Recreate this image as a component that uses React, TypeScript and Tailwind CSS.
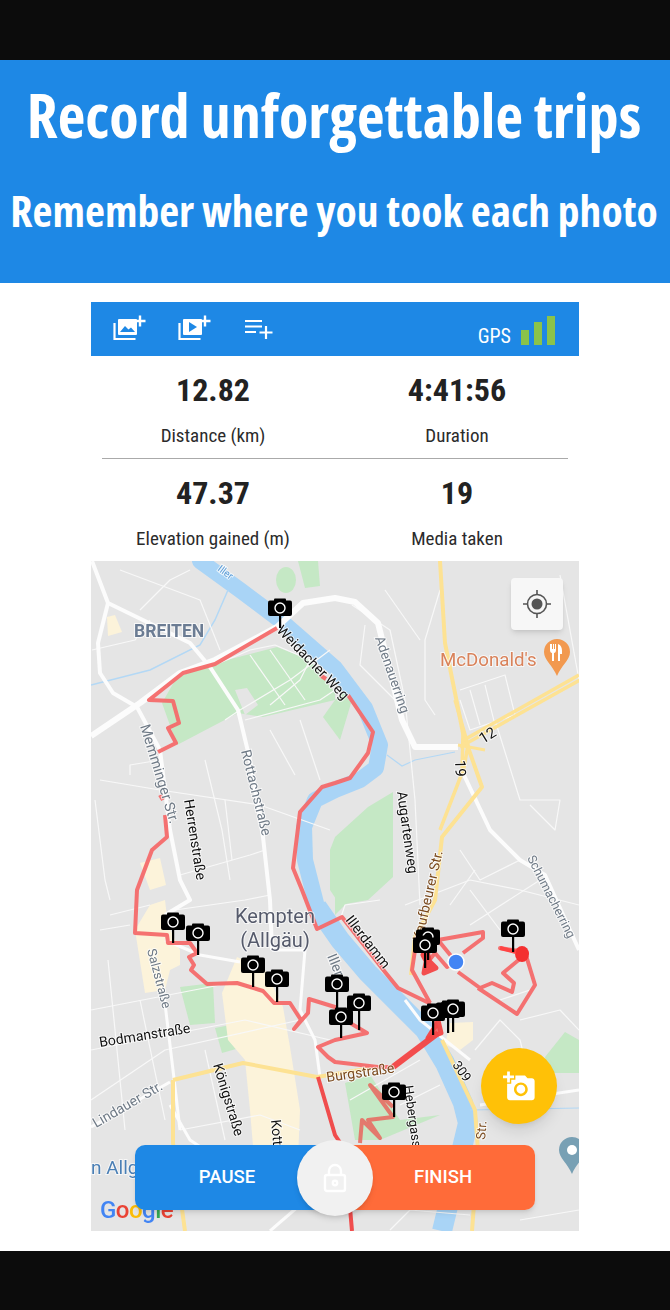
import React from "react";

const whiteMain: [string, number][] = [
  ["91,736 140,703 180,673 215,660 277,627 303,603 335,598 355,602 378,623 402,720 415,747 458,747", 6],
  ["92,561 108,603 190,643 210,667 238,710 250,760 263,837 270,900 272,950", 4],
  ["108,603 98,643 100,673 113,693 137,707 160,750 170,830 180,880 190,900 165,915", 4],
  ["163,987 173,1070 180,1130", 3],
  ["91,1127 170,1082", 3],
  ["463,773 490,830 520,860 545,875 579,950", 4],
  ["272,950 305,950 300,1010 315,1040 320,1077", 3],
  ["165,940 200,955 240,962", 3],
  ["405,1000 420,1020 470,1060", 3],
  ["480,1105 579,1090", 3],
  ["170,1105 190,1140 205,1150", 3],
  ["270,1231 300,1205", 3],
];
const whiteThin: string[] = [
  "92,650 135,640 150,620",
  "120,570 200,600 220,650",
  "140,610 170,580 190,570",
  "100,780 160,790 260,805 330,830",
  "95,800 105,880 110,900",
  "160,760 130,765 130,775",
  "205,760 222,830 230,880",
  "225,720 240,710 290,680 330,650",
  "245,720 320,700 335,690",
  "215,665 250,650 275,645 310,660 300,680 270,705",
  "250,655 285,705",
  "270,650 305,700",
  "180,875 250,855 265,850",
  "175,910 245,900 270,895",
  "225,800 232,860",
  "300,720 320,780",
  "270,730 295,775",
  "440,590 425,640 425,700 435,715",
  "385,590 420,640",
  "460,690 505,675 515,715 470,730 460,700",
  "470,690 480,725",
  "485,685 495,725",
  "495,720 520,800 560,800 555,830 530,805",
  "560,575 579,680",
  "352,605 390,630 405,700 415,800 420,905",
  "365,625 360,665 395,700",
  "460,850 480,880 520,860",
  "405,905 470,880 520,890 579,905",
  "450,905 475,870",
  "470,890 500,930",
  "340,920 345,905 380,900",
  "470,925 540,880",
  "500,1000 530,990",
  "475,1050 500,1020 520,1040 525,1060",
  "91,1010 220,985",
  "91,1050 245,1020 330,1040",
  "108,960 125,1130",
  "140,1000 165,1120",
  "91,1100 165,1050 300,1020",
  "180,1130 260,1115 300,1130",
  "205,1050 225,1140",
  "110,915 150,905",
  "100,930 130,925",
  "350,1100 420,1060",
  "400,1105 440,1085",
  "390,1230 410,1210 470,1215",
  "520,1220 579,1210",
  "520,1020 560,1010 579,1030",
];
const yellow: [string, number][] = [
  ["173,1080 243,1063 317,1077 378,1067", 4],
  ["173,1080 173,1143 185,1231", 4],
  ["440,561 445,643 463,733 482,787 442,837 435,900 415,937 411,975", 4],
  ["463,733 462,773 440,830", 3.5],
  ["455,700 468,745 463,773", 3.5],
  ["460,747 580,680", 3.5],
  ["462,741 579,675", 3.5],
  ["458,745 485,750", 3],
  ["442,1040 475,1110 478,1150 472,1231", 4],
];
const route1a = "277,628 215,664 183,673 149,700 173,701 179,723 168,728 176,743 158,752";
const route1b = "165,815 167,837 152,850 137,890 135,933 167,935 168,943 190,943 197,953 189,957 194,965 191,970 207,984 237,983 263,991 274,1003 290,1003 301,1020 294,1029 308,1013 309,999 335,1007 345,1020 367,1033 335,1040 318,1047 328,1057 335,1062 378,1067 393,1067";
const route2 = "438,1033 429,1003 398,988 385,972 342,917 317,929 302,890 293,868 300,812 322,787 335,783 350,778 368,753 373,732 348,695";
const route3 = "430,1003 412,970 417,937 427,963 435,953 447,967 456,962 438,940 483,932 483,938 463,953";
const route4 = "458,972 480,988 492,983 512,992 514,983 503,973 527,953 500,948 525,952 535,985 517,1014 478,988";
const cams: [number, number, number][] = [
  [280, 608, 628], [173, 922, 943], [198, 933, 955], [253, 965, 987], [277, 979, 1002],
  [337, 984, 1010], [359, 1003, 1030], [341, 1017, 1038], [428, 937, 960], [425, 945, 968],
  [513, 929, 952], [448, 1010, 1033], [453, 1009, 1032], [433, 1013, 1035], [394, 1092, 1117],
];
const labels: [string, number, number, number, number, string][] = [
  ["Iller", 217, 570, 37, 10, "#5b9bd5"],
  ["Weidacher Weg", 276, 631, 46, 14, "#111"],
  ["Memminger Str.", 140, 726, 73, 14.5, "#6f7a86"],
  ["Herrenstraße", 184, 800, 81, 14, "#111"],
  ["Rottachstraße", 241, 751, 76, 14, "#6f7a86"],
  ["Adenauerring", 375, 638, 71, 13.5, "#6f7a86"],
  ["Augartenweg", 397, 792, 82, 14, "#111"],
  ["Kaufbeurer Str.", 422, 942, -77, 14, "#7a4a1e"],
  ["Schumacherring", 527, 858, 63, 12.5, "#6f7a86"],
  ["Illerdamm", 345, 920, 52, 14, "#111"],
  ["Iller", 327, 956, 68, 14, "#6f7a86"],
  ["Salzstraße", 147, 950, 75, 13, "#6f7a86"],
  ["Bodmanstraße", 100, 1047, -9, 14, "#111"],
  ["Königstraße", 213, 1065, 73, 14, "#111"],
  ["Lindauer Str.", 96, 1128, -30, 14, "#6f7a86"],
  ["Kottern", 271, 1120, 85, 14, "#111"],
  ["Burgstraße", 327, 1082, -8, 14, "#7a4a1e"],
  ["Hebergasse", 404, 1086, 82, 13, "#111"],
  ["309", 452, 1065, 54, 13, "#111"],
  ["Str.", 485, 1140, -85, 13, "#7a4a1e"],
  ["12", 483, 744, -32, 15, "#111"],
  ["19", 455, 760, 88, 15, "#111"],
];

function MapDrawing() {
  const halo = { paintOrder: "stroke" as const, stroke: "#ffffff", strokeWidth: 2, strokeOpacity: 0.7 };
  return (
    <svg viewBox="91 561 488 670" className="block w-full h-full blur-[0.5px]" style={{ fontFamily: "Roboto, sans-serif" }}>
      <rect x="91" y="561" width="488" height="670" fill="#e5e5e5" />
      <g fill="#c5e8c5">
        <polygon points="178,675 215,663 277,647 310,660 335,693 335,700 263,717 238,713 177,745 162,703" />
        <polygon points="323,717 335,700 345,690 352,700 340,740" />
        <ellipse cx="286" cy="580" rx="10" ry="13" />
        <polygon points="298,561 318,561 320,586 305,588" />
        <polygon points="335,837 368,807 393,792 393,877 368,900 340,905 330,890 330,850" />
        <polygon points="180,987 213,983 215,1023 190,1025" />
        <polygon points="215,1028 230,1025 243,1047 222,1053" />
        <polygon points="345,1083 370,1075 400,1120 440,1115 380,1140 355,1140" />
        <polygon points="545,1057 565,1032 579,1040 579,1073 548,1073" />
        <polygon points="335,890 360,890 338,912 335,915" />
      </g>
      <polygon points="235,690 247,688 258,705 245,715" fill="#e5e5e5" />
      <g fill="#fcf3da">
        <polygon points="222,993 237,957 265,970 283,1007 290,1047 300,1110 298,1160 255,1170 250,1110 245,1060 228,1040" />
        <polygon points="150,905 165,900 168,925 180,950 180,965 170,970 165,990 145,993 135,930" />
        <polygon points="107,617 115,615 122,632 108,636" />
        <polygon points="140,863 160,858 166,885 150,890" />
        <polygon points="450,1023 473,1022 473,1040 460,1050 445,1045" />
      </g>
      <polyline points="200,561 240,590 280,620 335,668 365,708 380,745 376,768 360,780 335,790 315,800 304,827 305,860 317,907" fill="none" stroke="#a9d4f6" strokeWidth="16" strokeLinejoin="round" strokeLinecap="round" />
      <polyline points="317,907 340,940 368,973 425,1030 445,1063 463,1103 468,1123 452,1190 442,1231" fill="none" stroke="#a9d4f6" strokeWidth="20" strokeLinejoin="round" />
      <polyline points="91,685 150,670 200,645 215,620 228,590" fill="none" stroke="#b3d8f5" strokeWidth="1.5" />
      <polyline points="387,755 402,766 415,760 455,752" fill="none" stroke="#b3d8f5" strokeWidth="1.2" />
      <polyline points="470,1110 579,1108" fill="none" stroke="#b3d8f5" strokeWidth="1.2" />
      <g fill="none" stroke="#f8f8f8" strokeLinejoin="round">
        {whiteThin.map((p, i) => <polyline key={i} points={p} strokeWidth="1.2" />)}
        {whiteMain.map(([p, w], i) => <polyline key={i} points={p} strokeWidth={w} stroke="#fcfcfc" />)}
      </g>
      <g fill="none" stroke="#fde293" strokeLinejoin="round">
        {yellow.map(([p, w], i) => <polyline key={i} points={p} strokeWidth={w} />)}
      </g>
      <g fill="none" stroke="#f46a6a" strokeOpacity="0.95" strokeWidth="4" strokeLinejoin="round">
        <polyline points={route1a} />
        <polyline points={route1b} />
        <polyline points={route2} />
        <polyline points={route3} />
        <polyline points={route4} />
        <polyline points="160,795 163,800" />
        <polyline points="320,675 326,679" />
        <polyline points="393,1067 438,1033" strokeWidth="6" stroke="#f34545" />
        <polyline points="427,950 431,970 423,955 436,968 424,973 428,952" strokeWidth="5" stroke="#f34545" />
        <polyline points="436,1012 441,1033 428,1038 438,1022" strokeWidth="5" stroke="#f34545" />
        <polyline points="318,1077 335,1135 345,1150 352,1231" stroke="#f04545" />
        <polyline points="360,1143 362,1120 380,1138 368,1120 393,1117 370,1085 393,1107" stroke="#e57368" />
      </g>
      <ellipse cx="522" cy="954" rx="7" ry="8" fill="#f42f2f" />
      <polyline points="500,948 516,952" fill="none" stroke="#f44" strokeWidth="4" />
      <g textAnchor="start">
        {labels.map(([t, x, y, r, s, c], i) => (
          <text key={i} x={x} y={y} fontSize={s} fill={c} transform={`rotate(${r} ${x} ${y})`} style={halo}>{t}</text>
        ))}
      </g>
      <text x="134" y="637" fontSize="17.5" fontWeight="700" fill="#6b7c93" style={halo}>BREITEN</text>
      <text x="440" y="666" fontSize="18.7" fill="#d9825a" style={halo}>McDonald's</text>
      <text x="275" y="923" fontSize="20" textAnchor="middle" fill="#555a6b" style={halo}>Kempten</text>
      <text x="275" y="947" fontSize="20" textAnchor="middle" fill="#555a6b" style={halo}>(Allgäu)</text>
      <text x="91" y="1174" fontSize="19" fill="#4a7fb5" style={halo}>n Allgäu</text>
      <path d="M557 639a13 13 0 0 1 13 13c0 8-9 14-13 24c-4-10-13-16-13-24a13 13 0 0 1 13-13z" fill="#f2994f" />
      <path d="M550 644v6c0 2 1 3 2 3v8h2v-8c1 0 2-1 2-3v-6h-1v5h-1v-5h-1v5h-1v-5zM558 644c3 1 4 4 4 7v3h-2v7h-2z" fill="#fff" />
      <path d="M572 1137a13 13 0 0 1 13 13c0 8-9 14-13 24c-4-10-13-16-13-24a13 13 0 0 1 13-13z" fill="#78a0b4" />
      <circle cx="572" cy="1150" r="5" fill="#fff" />
      {cams.map(([x, y, b], i) => (
        <g key={i}>
          <rect x={x - 1} y={y} width="2.2" height={b - y} fill="#000" />
          <rect x={x - 12} y={y - 7.5} width="24" height="15.5" rx="2" fill="#000" />
          <rect x={x - 6} y={y - 9.5} width="12" height="4" rx="1" fill="#000" />
          <circle cx={x} cy={y} r="5" fill="#000" stroke="#fff" strokeWidth="1.4" />
        </g>
      ))}
      <circle cx="456" cy="962" r="8" fill="#4285f4" stroke="#fff" strokeWidth="1.5" />
      <text x="100" y="1218" fontSize="24" fontWeight="500" letterSpacing="-0.5">
        <tspan fill="#4285f4">G</tspan><tspan fill="#ea4335">o</tspan><tspan fill="#fbbc05">o</tspan><tspan fill="#4285f4">g</tspan><tspan fill="#34a853">l</tspan><tspan fill="#ea4335">e</tspan>
      </text>
    </svg>
  );
}

function ImageAdd({ video }: { video?: boolean }) {
  return (
    <svg width="33" height="26" viewBox="0 0 33 26" fill="none">
      <path d="M1.5 8v16h21" stroke="#fff" strokeWidth="2.2" />
      <rect x="5" y="4" width="19" height="16" rx="1" fill="#fff" />
      {video ? (
        <path d="M11 7v10l8-5z" fill="#1e88e5" />
      ) : (
        <path d="M7 17l5-6 3.5 3.5 2.5-2 4 4.5z" fill="#1e88e5" />
      )}
      <path d="M27 0.5v11M21.5 6h11" stroke="#fff" strokeWidth="2.4" />
    </svg>
  );
}

function Stat({ value, label }: { value: string; label: string }) {
  return (
    <div className="flex flex-col items-center">
      <div className="text-[32px] leading-[38px] font-bold text-[#222] [font-stretch:75%]">{value}</div>
      <div className="mt-[16px] text-[19px] leading-[22px] text-[#2b2b2b] [font-stretch:75%]">{label}</div>
    </div>
  );
}

export default function App() {
  return (
    <div className="w-[670px] h-[1310px] bg-white flex flex-col font-['Roboto',sans-serif] overflow-hidden">
      <div className="h-[60px] bg-[#0c0c0c]" />
      <div className="h-[223px] bg-[#1e88e5] flex flex-col items-center text-white font-['Open_Sans',sans-serif] font-bold [font-stretch:75%]">
        <div className="mt-[14px] -ml-[2px] text-[60.3px] leading-[82px] whitespace-nowrap">Record unforgettable trips</div>
        <div className="mt-[26px] -ml-[2px] text-[43.5px] leading-[58px] whitespace-nowrap">Remember where you took each photo</div>
      </div>
      <div className="flex-1 flex flex-col pl-[91px] pr-[91px] pt-[19px]">
        <div className="h-[54px] bg-[#1e88e5] flex items-center pl-[22px] pr-[24px]">
          <div className="flex items-center gap-[32px] mb-[2px]">
            <ImageAdd />
            <ImageAdd video />
            <svg width="28" height="20" viewBox="0 0 28 20" fill="none" stroke="#fff" strokeWidth="2.2" className="mt-[2px] ml-[2px]">
              <path d="M0 2h17M0 7.5h17M0 13h11M21 7v13M14.5 13.5h13" />
            </svg>
          </div>
          <div className="ml-auto flex items-end gap-[10px] self-end pb-[11px]">
            <span className="text-[20px] leading-[18px] text-white [font-stretch:75%]">GPS</span>
            <div className="flex items-end gap-[5px]">
              <div className="w-[8px] h-[15px] bg-[#8bc34a]" />
              <div className="w-[8px] h-[23px] bg-[#8bc34a]" />
              <div className="w-[8px] h-[29px] bg-[#8bc34a]" />
            </div>
          </div>
        </div>
        <div className="grid grid-cols-2 pt-[15px]">
          <Stat value="12.82" label="Distance (km)" />
          <Stat value="4:41:56" label="Duration" />
        </div>
        <div className="mx-[11px] mt-[11px] h-px bg-[#aaaaaa]" />
        <div className="grid grid-cols-2 pt-[15px]">
          <Stat value="47.37" label="Elevation gained (m)" />
          <Stat value="19" label="Media taken" />
        </div>
        <div className="relative mt-[11px] h-[670px] w-[488px] overflow-hidden">
          <MapDrawing />
          <div className="absolute left-[420px] top-[17px] w-[52px] h-[52px] bg-[#f7f7f7] rounded-sm shadow-md flex items-center justify-center">
            <svg width="30" height="30" viewBox="0 0 30 30" fill="none" stroke="#555" strokeWidth="1.6">
              <circle cx="15" cy="15" r="9.5" />
              <circle cx="15" cy="15" r="5.5" fill="#555" stroke="none" />
              <path d="M15 1v4.5M15 24.5V29M1 15h4.5M24.5 15H29" />
            </svg>
          </div>
          <div className="absolute left-[390px] top-[487px] w-[76px] h-[76px] rounded-full bg-[#ffc107] shadow-lg flex items-center justify-center">
            <svg width="33" height="33" viewBox="0 0 24 24" fill="#fff">
              <path d="M3 4V1h2v3h3v2H5v3H3V6H0V4h3zm3 6V7h3V4h7l1.83 2H21c1.1 0 2 .9 2 2v12c0 1.1-.9 2-2 2H5c-1.1 0-2-.9-2-2V10h3zm7 9c2.76 0 5-2.24 5-5s-2.24-5-5-5-5 2.24-5 5 2.24 5 5 5zm-3.2-5c0 1.77 1.43 3.2 3.2 3.2s3.2-1.43 3.2-3.2-1.43-3.2-3.2-3.2-3.2 1.43-3.2 3.2z" />
            </svg>
          </div>
          <div className="absolute left-[44px] bottom-[21px] w-[400px] h-[65px] flex text-white text-[18.5px] font-medium shadow-md rounded-[10px]">
            <div className="w-1/2 bg-[#1e88e5] rounded-l-[10px] flex items-center justify-center pr-[16px]">PAUSE</div>
            <div className="w-1/2 bg-[#ff6b39] rounded-r-[10px] flex items-center justify-center pl-[16px]">FINISH</div>
            <div className="absolute left-[162px] top-[-5px] w-[76px] h-[76px] rounded-full bg-[#f1f1f1] shadow-md flex items-center justify-center">
              <svg width="26" height="30" viewBox="0 0 26 30" fill="none" stroke="#fff" strokeWidth="2.4">
                <rect x="3" y="12" width="20" height="16" rx="2" />
                <path d="M7 12V8a6 6 0 0 1 12 0v4" />
                <circle cx="13" cy="20" r="2.2" />
              </svg>
            </div>
          </div>
        </div>
      </div>
      <div className="h-[59px] bg-[#0c0c0c]" />
    </div>
  );
}
